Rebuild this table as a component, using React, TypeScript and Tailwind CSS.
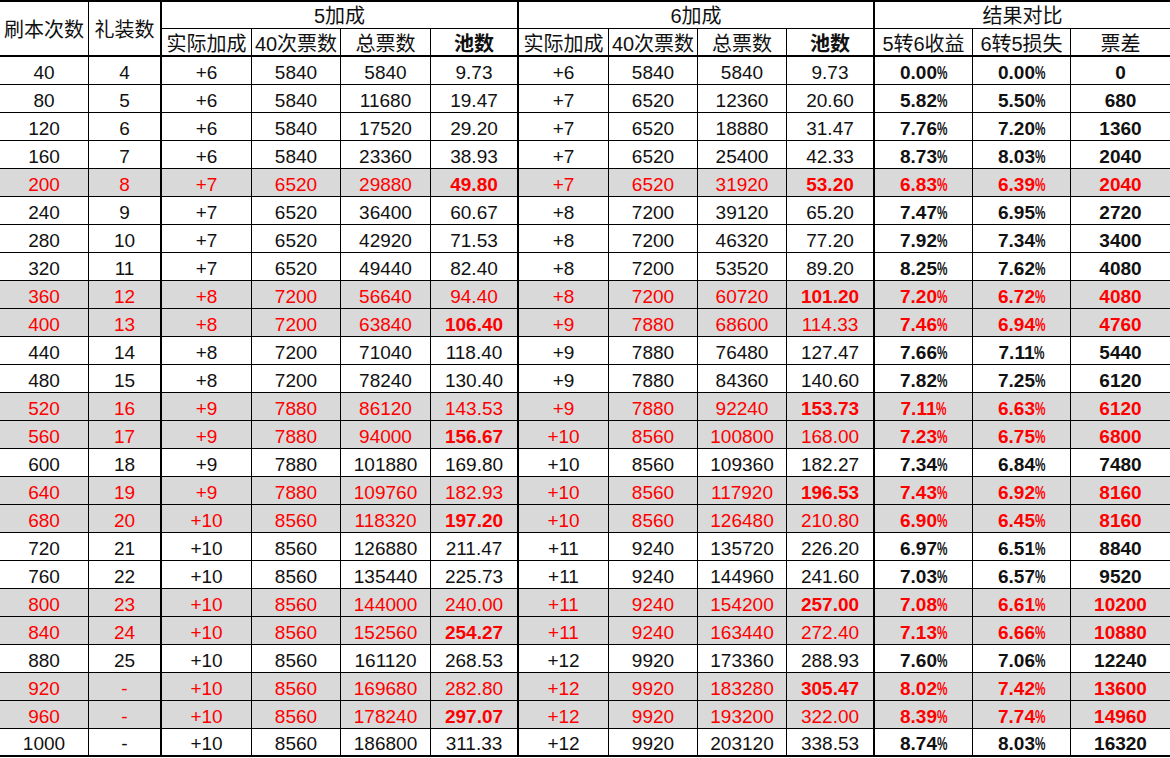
const cols =
  "grid-cols-[89px_73px_90px_89px_90px_88px_90px_89px_89px_88px_98px_98px_99px]";

// which columns get the heavy right rule
const thick = [1, 5, 9];

type Row = {
  cells: string[];
  red?: boolean;
  b5?: boolean; // 5加成 池数 bold
  b6?: boolean; // 6加成 池数 bold
};

const raw: [string, boolean, boolean, boolean][] = [
  ["40,4,+6,5840,5840,9.73,+6,5840,5840,9.73,0.00%,0.00%,0", false, false, false],
  ["80,5,+6,5840,11680,19.47,+7,6520,12360,20.60,5.82%,5.50%,680", false, false, false],
  ["120,6,+6,5840,17520,29.20,+7,6520,18880,31.47,7.76%,7.20%,1360", false, false, false],
  ["160,7,+6,5840,23360,38.93,+7,6520,25400,42.33,8.73%,8.03%,2040", false, false, false],
  ["200,8,+7,6520,29880,49.80,+7,6520,31920,53.20,6.83%,6.39%,2040", true, true, true],
  ["240,9,+7,6520,36400,60.67,+8,7200,39120,65.20,7.47%,6.95%,2720", false, false, false],
  ["280,10,+7,6520,42920,71.53,+8,7200,46320,77.20,7.92%,7.34%,3400", false, false, false],
  ["320,11,+7,6520,49440,82.40,+8,7200,53520,89.20,8.25%,7.62%,4080", false, false, false],
  ["360,12,+8,7200,56640,94.40,+8,7200,60720,101.20,7.20%,6.72%,4080", true, false, true],
  ["400,13,+8,7200,63840,106.40,+9,7880,68600,114.33,7.46%,6.94%,4760", true, true, false],
  ["440,14,+8,7200,71040,118.40,+9,7880,76480,127.47,7.66%,7.11%,5440", false, false, false],
  ["480,15,+8,7200,78240,130.40,+9,7880,84360,140.60,7.82%,7.25%,6120", false, false, false],
  ["520,16,+9,7880,86120,143.53,+9,7880,92240,153.73,7.11%,6.63%,6120", true, false, true],
  ["560,17,+9,7880,94000,156.67,+10,8560,100800,168.00,7.23%,6.75%,6800", true, true, false],
  ["600,18,+9,7880,101880,169.80,+10,8560,109360,182.27,7.34%,6.84%,7480", false, false, false],
  ["640,19,+9,7880,109760,182.93,+10,8560,117920,196.53,7.43%,6.92%,8160", true, false, true],
  ["680,20,+10,8560,118320,197.20,+10,8560,126480,210.80,6.90%,6.45%,8160", true, true, false],
  ["720,21,+10,8560,126880,211.47,+11,9240,135720,226.20,6.97%,6.51%,8840", false, false, false],
  ["760,22,+10,8560,135440,225.73,+11,9240,144960,241.60,7.03%,6.57%,9520", false, false, false],
  ["800,23,+10,8560,144000,240.00,+11,9240,154200,257.00,7.08%,6.61%,10200", true, false, true],
  ["840,24,+10,8560,152560,254.27,+11,9240,163440,272.40,7.13%,6.66%,10880", true, true, false],
  ["880,25,+10,8560,161120,268.53,+12,9920,173360,288.93,7.60%,7.06%,12240", false, false, false],
  ["920,-,+10,8560,169680,282.80,+12,9920,183280,305.47,8.02%,7.42%,13600", true, false, true],
  ["960,-,+10,8560,178240,297.07,+12,9920,193200,322.00,8.39%,7.74%,14960", true, true, false],
  ["1000,-,+10,8560,186800,311.33,+12,9920,203120,338.53,8.74%,8.03%,16320", false, false, false],
];

const rows: Row[] = raw.map(([s, red, b5, b6]) => ({
  cells: s.split(","),
  red,
  b5,
  b6,
}));

function Value({ text }: { text: string }) {
  if (!text.endsWith("%")) return <>{text}</>;
  return (
    <>
      {text.slice(0, -1)}
      <span className="inline-block w-[10px] origin-left scale-x-[0.62] font-semibold">%</span>
    </>
  );
}

function Cell({
  i,
  last,
  children,
  className = "",
}: {
  i: number;
  last: boolean;
  children: React.ReactNode;
  className?: string;
}) {
  const right =
    i === 12 ? "" : thick.includes(i) ? "border-r-2" : "border-r";
  return (
    <div
      className={`flex h-[28px] items-center justify-center border-black pt-[3px] ${right} ${
        last ? "border-b-2" : "border-b"
      } ${className}`}
    >
      {children}
    </div>
  );
}

export default function App() {
  return (
    <div
      className="w-[1170px] h-[758px] overflow-hidden bg-white text-[19px] leading-none text-[#111]"
      style={{ fontFamily: '"Liberation Sans", "Noto Sans CJK SC", sans-serif' }}
    >
      <div className={`grid ${cols} border-t-2 border-black`}>
        {/* header */}
        <div className="row-span-2 flex items-center justify-center border-r border-b-2 border-black pt-[3px] text-[20px]">
          刷本次数
        </div>
        <div className="row-span-2 flex items-center justify-center border-r-2 border-b-2 border-black pt-[3px] text-[20px]">
          礼装数
        </div>
        <div className="col-span-4 flex h-[27px] items-center justify-center border-r-2 border-b border-black pt-[2px] text-[20px]">
          5加成
        </div>
        <div className="col-span-4 flex h-[27px] items-center justify-center border-r-2 border-b border-black pt-[2px] text-[20px]">
          6加成
        </div>
        <div className="col-span-3 flex h-[27px] items-center justify-center border-b border-black pt-[2px] text-[20px]">
          结果对比
        </div>
        {["实际加成", "40次票数", "总票数", "池数", "实际加成", "40次票数", "总票数", "池数", "5转6收益", "6转5损失", "票差"].map(
          (h, k) => {
            const i = k + 2;
            const right = i === 12 ? "" : thick.includes(i) ? "border-r-2" : "border-r";
            return (
              <div
                key={k}
                className={`flex h-[28px] items-center justify-center whitespace-nowrap border-b-2 border-black pt-[3px] text-[20px] ${right} ${
                  h === "池数" ? "font-bold" : ""
                }`}
              >
                {h}
              </div>
            );
          }
        )}

        {/* data */}
        {rows.map((r, ri) => {
          const last = ri === rows.length - 1;
          return r.cells.map((c, i) => {
            const bold =
              i >= 10 || (i === 5 && r.b5) || (i === 9 && r.b6) ? "font-bold" : "";
            const tone = r.red ? "bg-[#d9d9d9] text-[#ff0000]" : "";
            return (
              <Cell key={`${ri}-${i}`} i={i} last={last} className={`${bold} ${tone}`}>
                <Value text={c} />
              </Cell>
            );
          });
        })}
      </div>
    </div>
  );
}
